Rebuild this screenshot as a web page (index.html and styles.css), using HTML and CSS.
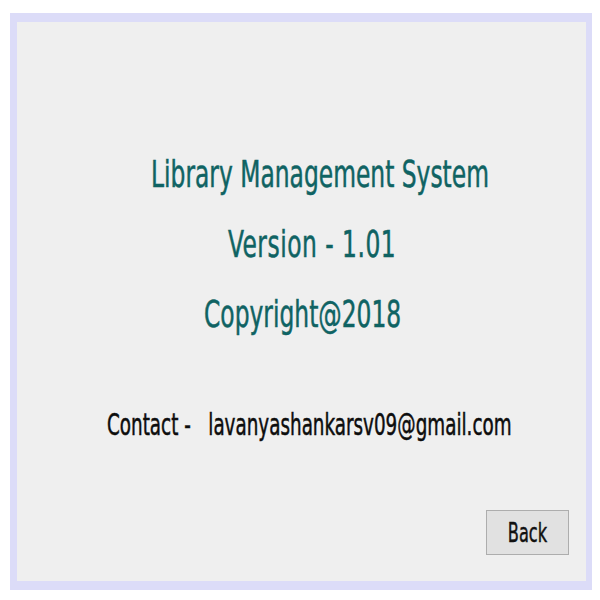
FILE: index.html
```html
<!DOCTYPE html>
<html>
<head>
<meta charset="utf-8">
<link rel="stylesheet" href="styles.css">
</head>
<body>
<div class="frame">
  <div class="panel">
    <div class="line title">Library Management System</div>
    <div class="line version">Version - 1.01</div>
    <div class="line copy">Copyright@2018</div>
    <div class="line contact">Contact - &nbsp; lavanyashankarsv09@gmail.com</div>
    <div class="actions"><button class="back"><span class="back-label">Back</span></button></div>
  </div>
</div>
</body>
</html>
```
FILE: styles.css
```css
html, body {
  margin: 0;
  padding: 0;
  background: #ffffff;
}
.frame {
  margin: 13px 0 0 10px;
  width: 569px;
  height: 559px;
  border-style: solid;
  border-color: #dcdcf8;
  border-width: 9px 6px 9px 7px;
}
.panel {
  height: 100%;
  background: #efefef;
  display: flex;
  flex-direction: column;
  align-items: flex-start;
  font-family: "DejaVu Sans Condensed", "DejaVu Sans", sans-serif;
}
.line {
  white-space: nowrap;
  line-height: 1;
  transform-origin: left top;
  -webkit-text-stroke: 0.35px currentColor;
}
.title, .version, .copy {
  color: #0f6363;
  font-size: 26px;
  height: 26px;
  transform: scaleY(1.42);
}
.title { margin: 134px 0 0 134px; }
.version { margin: 44px 0 0 211px; letter-spacing: 0.5px; }
.copy { margin: 44px 0 0 187px; }
.contact {
  color: #0d0d0d;
  font-size: 20.4px;
  height: 20px;
  transform: scaleY(1.48);
  margin: 88px 0 0 90px;
}
.actions {
  margin-top: auto;
  align-self: flex-end;
  margin-right: 17px;
  margin-bottom: 26px;
}
.back {
  width: 83px;
  height: 45px;
  background: #e1e1e1;
  border: 1px solid #adadad;
  border-radius: 0;
  font-family: "DejaVu Sans Condensed", "DejaVu Sans", sans-serif;
  font-size: 18px;
  color: #111;
  padding: 0;
  display: flex;
  align-items: center;
  justify-content: center;
}
.back-label {
  display: inline-block;
  line-height: 1;
  transform: scaleY(1.52);
  -webkit-text-stroke: 0.3px currentColor;
}
```
